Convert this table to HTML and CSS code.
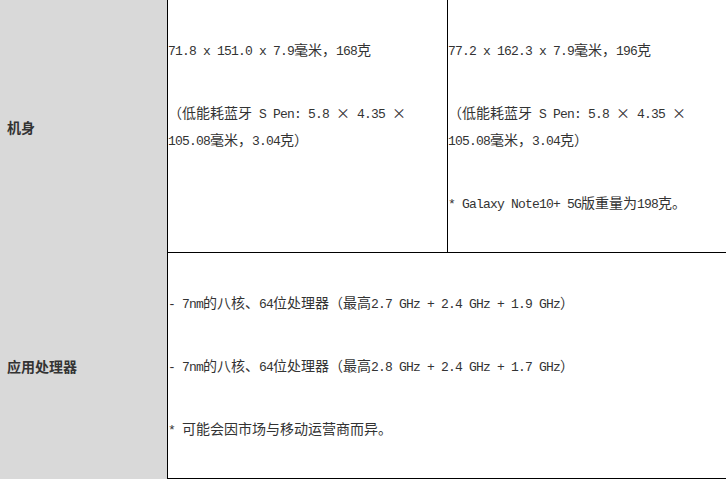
FILE: index.html
```html
<!DOCTYPE html>
<html lang="zh-CN">
<head>
<meta charset="utf-8">
<title>规格</title>
<link rel="stylesheet" href="styles.css">
</head>
<body>
<table class="spec">
  <colgroup>
    <col class="c-label">
    <col class="c-a">
    <col class="c-b">
  </colgroup>
  <tr>
    <th class="label">机身</th>
    <td class="cell">
      <p><span class="m">71.8 x 151.0 x 7.9</span>毫米，<span class="m">168</span>克</p>
      <p>（低能耗蓝牙<span class="m"> S Pen: 5.8 </span><span class="x">×</span><span class="m"> 4.35 </span><span class="x">×</span><span class="m"> 105.08</span>毫米，<span class="m">3.04</span>克）</p>
    </td>
    <td class="cell">
      <p><span class="m">77.2 x 162.3 x 7.9</span>毫米，<span class="m">196</span>克</p>
      <p>（低能耗蓝牙<span class="m"> S Pen: 5.8 </span><span class="x">×</span><span class="m"> 4.35 </span><span class="x">×</span><span class="m"> 105.08</span>毫米，<span class="m">3.04</span>克）</p>
      <p><span class="m">* Galaxy Note10+ 5G</span>版重量为<span class="m">198</span>克。</p>
    </td>
  </tr>
  <tr>
    <th class="label">应用处理器</th>
    <td class="cell" colspan="2">
      <p><span class="m">- 7nm</span>的八核、<span class="m">64</span>位处理器（最高<span class="m">2.7 GHz + 2.4 GHz + 1.9 GHz</span>）</p>
      <p><span class="m">- 7nm</span>的八核、<span class="m">64</span>位处理器（最高<span class="m">2.8 GHz + 2.4 GHz + 1.7 GHz</span>）</p>
      <p><span class="m">* </span>可能会因市场与移动运营商而异。</p>
    </td>
  </tr>
</table>
</body>
</html>
```

FILE: styles.css
```css
html, body {
  margin: 0;
  padding: 0;
  background: #ffffff;
}

body {
  font-family: "Noto Sans CJK SC", "Liberation Sans", sans-serif;
  font-size: 14px;
  color: #333333;
  overflow: hidden;
}

.spec {
  width: 727px;
  table-layout: fixed;
  border-collapse: separate;
  border-spacing: 0;
}

.c-label { width: 167px; }
.c-a { width: 280px; }
.c-b { width: 280px; }

.label {
  background: #d9d9d9;
  text-align: left;
  vertical-align: middle;
  padding: 0 0 0 7px;
  font-weight: bold;
  font-size: 14px;
  color: #333333;
}

.cell {
  vertical-align: top;
  padding: 0;
  border-left: 1px solid #000000;
  border-bottom: 1px solid #000000;
}

.cell p {
  margin: 36px 0;
  line-height: 27px;
}

.m {
  font-family: "Liberation Mono", monospace;
  font-size: 13px;
  letter-spacing: -0.8px;
  line-height: 1;
}

.x {
  display: inline-block;
  width: 14px;
  text-align: center;
  line-height: 1;
}
```
